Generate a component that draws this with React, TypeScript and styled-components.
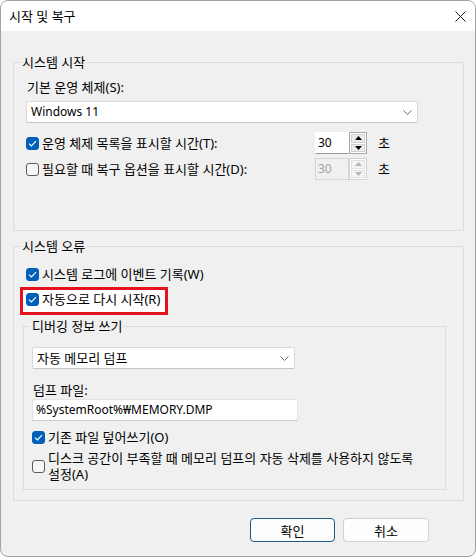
import React from "react";
import styled, { createGlobalStyle } from "styled-components";

const GlobalStyle = createGlobalStyle`
  html, body {
    margin: 0;
    padding: 0;
    background: #ffffff;
  }
  body {
    font-family: "Noto Sans", "Noto Sans CJK KR", sans-serif;
    font-size: 13px;
    line-height: 16px;
    color: #000;
  }
`;

const Window = styled.div`
  width: 476px;
  height: 557px;
  box-sizing: border-box;
  border: 1px solid #a3a3a3;
  border-radius: 8px;
  overflow: hidden;
  display: flex;
  flex-direction: column;
  background: #f0f0f0;
`;

const TitleBar = styled.div`
  height: 30px;
  flex: 0 0 30px;
  background: #ffffff;
  display: flex;
  align-items: center;
  justify-content: space-between;
  padding: 0 9px 0 8px;
`;

const Content = styled.div`
  flex: 1;
  padding: 23px 11px 0 12px;
  display: flex;
  flex-direction: column;
`;

const Group = styled.fieldset<{ $pad: number; $bottom: number; $top?: number }>`
  margin: ${(p) => p.$top ?? 0}px 0 0 0;
  min-width: 0;
  border: 1px solid #dcdcdc;
  padding: 0 ${(p) => p.$pad}px ${(p) => p.$bottom}px ${(p) => p.$pad}px;
  display: flex;
  flex-direction: column;
  align-items: flex-start;
`;

const InnerGroup = styled(Group)`
  margin: 3px 5px 0 -3px;
  align-self: stretch;
`;

const Legend = styled.legend<{ $shift: number }>`
  padding: 0 2px;
  margin-left: -${(p) => p.$shift}px;
  line-height: 16px;
`;

const FieldLabel = styled.div<{ $top: number }>`
  margin-top: ${(p) => p.$top}px;
  height: 16px;
  padding-left: 1px;
`;

// plain latin values (Windows 11, 30, path) are drawn a size smaller, like Segoe UI
const Latin = styled.span`
  font-size: 12px;
`;

const Select = styled.div<{ $width: number; $top: number }>`
  width: ${(p) => p.$width}px;
  height: 22px;
  box-sizing: border-box;
  margin-top: ${(p) => p.$top}px;
  background: #ffffff;
  border: 1px solid #d9d9d9;
  border-bottom-color: #c4c4c4;
  border-radius: 2px;
  display: flex;
  align-items: center;
  justify-content: space-between;
  padding: 0 5px 0 4px;
`;

const TextBox = styled.div<{ $width: number }>`
  width: ${(p) => p.$width}px;
  height: 22px;
  box-sizing: border-box;
  margin-top: 1px;
  background: #ffffff;
  border: 1px solid #e3e3e3;
  border-bottom-color: #c8c8c8;
  display: flex;
  align-items: center;
  padding-left: 3px;
`;

const CheckRow = styled.div<{ $top: number; $height?: number }>`
  margin-top: ${(p) => p.$top}px;
  min-height: ${(p) => p.$height ?? 20}px;
  display: flex;
  align-items: center;
  gap: 3px;
`;

const Box = styled.span<{ $checked: boolean }>`
  width: 13px;
  height: 13px;
  flex: 0 0 13px;
  box-sizing: border-box;
  border-radius: 3px;
  display: flex;
  align-items: center;
  justify-content: center;
  background: ${(p) => (p.$checked ? "#005fb8" : "#f7f7f7")};
  border: 1px solid ${(p) => (p.$checked ? "#005fb8" : "#5c5c5c")};
`;

const Highlight = styled.div`
  margin: 3px 0 0 -6px;
  border: 3px solid #e3121d;
  padding: 0 5px 4px 3px;
  background: #ffffff;
`;

const SpinRow = styled.div<{ $top: number }>`
  margin-top: ${(p) => p.$top}px;
  display: grid;
  grid-template-columns: 289px 34px 18px auto;
  align-items: center;
  height: 22px;
`;

const SpinInput = styled.div<{ $disabled?: boolean }>`
  height: 22px;
  box-sizing: border-box;
  background: ${(p) => (p.$disabled ? "#f0f0f0" : "#ffffff")};
  border: 1px solid ${(p) => (p.$disabled ? "#d6d6d6" : "#ffffff")};
  border-bottom-color: ${(p) => (p.$disabled ? "#d6d6d6" : "#9a9a9a")};
  color: ${(p) => (p.$disabled ? "#a3a3a3" : "#000")};
  display: flex;
  align-items: center;
  padding-left: 2px;
`;

const Spinner = styled.div<{ $disabled?: boolean }>`
  height: 22px;
  box-sizing: border-box;
  border: 1px solid ${(p) => (p.$disabled ? "#d2d2d2" : "#a7a7a7")};
  display: flex;
  flex-direction: column;
  gap: 1px;
  padding: 1px;
  background: #ffffff;
`;

const SpinButton = styled.div<{ $disabled?: boolean }>`
  flex: 1;
  background: ${(p) => (p.$disabled ? "#f4f4f4" : "#ececec")};
  border: 1px solid ${(p) => (p.$disabled ? "#e2e2e2" : "#cfcfcf")};
  display: flex;
  align-items: center;
  justify-content: center;
`;

const Unit = styled.span`
  padding-left: 11px;
`;

const WrapText = styled.span`
  max-width: 388px;
  line-height: 16px;
  word-break: keep-all;
`;

const Footer = styled.div`
  margin-top: 17px;
  display: flex;
  justify-content: flex-end;
  gap: 8px;
  padding-right: 35px;
`;

const Button = styled.button<{ $primary?: boolean }>`
  width: ${(p) => (p.$primary ? 85 : 86)}px;
  height: 24px;
  box-sizing: border-box;
  background: #fdfdfd;
  border: 1px solid ${(p) => (p.$primary ? "#1f5a82" : "#d0d0d0")};
  border-radius: 4px;
  font-family: inherit;
  font-size: 13px;
  color: #000;
  padding: 0;
`;

function Check({ checked }: { checked: boolean }) {
  return (
    <Box $checked={checked}>
      {checked && (
        <svg width="9" height="7" viewBox="0 0 9 7">
          <path d="M1 3.6 L3.4 6 L8 1.2" fill="none" stroke="#fff" strokeWidth="1.2" />
        </svg>
      )}
    </Box>
  );
}

function Chevron() {
  return (
    <svg width="9" height="5" viewBox="0 0 9 5">
      <path d="M0.5 0.5 L4.5 4.5 L8.5 0.5" fill="none" stroke="#6a6a6a" strokeWidth="1" />
    </svg>
  );
}

function Arrow({ up, color }: { up: boolean; color: string }) {
  return (
    <svg width="7" height="4" viewBox="0 0 7 4">
      <path d={up ? "M0 4 L3.5 0 L7 4 Z" : "M0 0 L3.5 4 L7 0 Z"} fill={color} />
    </svg>
  );
}

function SpinField({ value, disabled }: { value: string; disabled?: boolean }) {
  const color = disabled ? "#b4b4b4" : "#000";
  return (
    <>
      <SpinInput $disabled={disabled}>
        <Latin>{value}</Latin>
      </SpinInput>
      <Spinner $disabled={disabled}>
        <SpinButton $disabled={disabled}>
          <Arrow up color={color} />
        </SpinButton>
        <SpinButton $disabled={disabled}>
          <Arrow up={false} color={color} />
        </SpinButton>
      </Spinner>
    </>
  );
}

export default function App() {
  return (
    <>
      <GlobalStyle />
      <Window>
        <TitleBar>
          <span>시작 및 복구</span>
          <svg width="11" height="11" viewBox="0 0 11 11">
            <path d="M0.5 0.5 L10.5 10.5 M10.5 0.5 L0.5 10.5" stroke="#1a1a1a" strokeWidth="1" />
          </svg>
        </TitleBar>
        <Content>
          <Group $pad={12} $bottom={50}>
            <Legend $shift={6}>시스템 시작</Legend>
            <FieldLabel $top={9}>기본 운영 체제(S):</FieldLabel>
            <Select $width={392} $top={6}>
              <Latin>Windows 11</Latin>
              <Chevron />
            </Select>
            <SpinRow $top={9}>
              <CheckRow $top={0}>
                <Check checked />
                <span>운영 체제 목록을 표시할 시간(T):</span>
              </CheckRow>
              <SpinField value="30" />
              <Unit>초</Unit>
            </SpinRow>
            <SpinRow $top={4}>
              <CheckRow $top={0}>
                <Check checked={false} />
                <span>필요할 때 복구 옵션을 표시할 시간(D):</span>
              </CheckRow>
              <SpinField value="30" disabled />
              <Unit>초</Unit>
            </SpinRow>
          </Group>

          <Group $pad={12} $bottom={10} $top={7}>
            <Legend $shift={6}>시스템 오류</Legend>
            <CheckRow $top={10}>
              <Check checked />
              <span>시스템 로그에 이벤트 기록(W)</span>
            </CheckRow>
            <Highlight>
              <CheckRow $top={0} $height={18}>
                <Check checked />
                <span>자동으로 다시 시작(R)</span>
              </CheckRow>
            </Highlight>

            <InnerGroup $pad={8} $bottom={7}>
              <Legend $shift={2}>디버깅 정보 쓰기</Legend>
              <Select $width={263} $top={13}>
                <span>자동 메모리 덤프</span>
                <Chevron />
              </Select>
              <FieldLabel $top={13}>덤프 파일:</FieldLabel>
              <TextBox $width={266}>
                <Latin>%SystemRoot%₩MEMORY.DMP</Latin>
              </TextBox>
              <CheckRow $top={6}>
                <Check checked />
                <span>기존 파일 덮어쓰기(O)</span>
              </CheckRow>
              <CheckRow $top={3}>
                <Check checked={false} />
                <WrapText>
                  디스크 공간이 부족할 때 메모리 덤프의 자동 삭제를 사용하지 않도록 설정(A)
                </WrapText>
              </CheckRow>
            </InnerGroup>
          </Group>

          <Footer>
            <Button $primary>확인</Button>
            <Button>취소</Button>
          </Footer>
        </Content>
      </Window>
    </>
  );
}
